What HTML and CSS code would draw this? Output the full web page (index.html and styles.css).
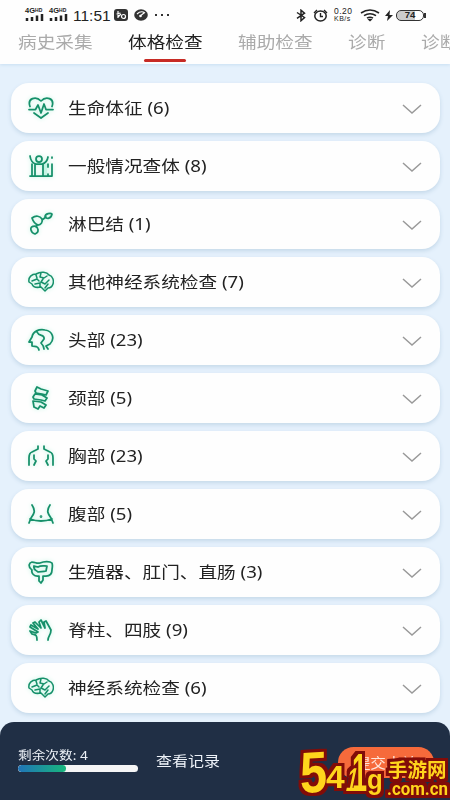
FILE: index.html
```html
<!DOCTYPE html>
<html lang="zh-CN">
<head>
<meta charset="utf-8">
<title>体格检查</title>
<link rel="stylesheet" href="styles.css">
</head>
<body>
<div class="app">
<header class="header">
<div class="status">
<div class="signal"><span>4G<i>HD</i></span><svg width="19" height="7" viewBox="0 0 19 7"><path d="M2 4v3M7 3v4M12 1.500v5.500M17 0v7" stroke="#222" stroke-width="2.5"/></svg></div>
<div class="signal"><span>4G<i>HD</i></span><svg width="19" height="7" viewBox="0 0 19 7"><path d="M2 4v3M7 3v4M12 1.500v5.500M17 0v7" stroke="#222" stroke-width="2.5"/></svg></div>
<div class="time">11:51</div>
<svg class="app-a" width="14" height="12" viewBox="0 0 14 12"><rect width="14" height="12" rx="3" fill="#333"/><path d="M4 2v7M2.500 5l4-1M4 8l3-3" stroke="#fff" stroke-width="1.2" fill="none"/><circle cx="9.500" cy="7.500" r="2" fill="none" stroke="#fff" stroke-width="1.2"/></svg>
<svg class="app-b" width="14" height="12" viewBox="0 0 14 12"><ellipse cx="7" cy="6" rx="6.800" ry="5.800" fill="#333"/><path d="M3 5q4-4 8-1M6 7l4-3" stroke="#fff" stroke-width="1.1" fill="none"/><circle cx="6.500" cy="7" r="1.300" fill="#fff"/></svg>
<svg class="dots" width="16" height="4" viewBox="0 0 16 4"><path d="M1 2h2M7 2h2M13 2h2" stroke="#333" stroke-width="2"/></svg>
<div class="status-right">
<svg width="10" height="13" viewBox="0 0 10 13"><path d="M1 3.500l7.500 5L5 11.700V1.200l3.500 3L1 9.300" fill="none" stroke="#222" stroke-width="1.5"/></svg>
<svg width="15" height="13" viewBox="0 0 15 13"><ellipse cx="7.500" cy="7" rx="5.700" ry="5" fill="none" stroke="#222" stroke-width="1.5"/><path d="M1 4l3-3M14 4l-3-3M7.500 4v3.500H10" fill="none" stroke="#222" stroke-width="1.4"/></svg>
<div class="speed"><span>0.20</span><span>KB/s</span></div>
<svg width="20" height="13" viewBox="0 0 20 13"><path d="M1 4Q10-2 19 4M4 6.700q6-4 12 0M7 9.200q3-2 6 0" fill="none" stroke="#222" stroke-width="1.6"/><path d="M7.500 10.300q2.500-1 5 0L10 12.500z" fill="#222"/></svg>
<svg class="bolt" width="8" height="11" viewBox="0 0 8 11"><path d="M5 0L0 6h3L2 11l6-6H4.500z" fill="#222"/></svg>
<div class="battery"><span>74</span></div>
</div>
</div>
<nav class="tabs">
<a class="tab"><span>病史采集</span></a><a class="tab active"><span>体格检查</span></a><a class="tab"><span>辅助检查</span></a><a class="tab short"><span>诊断</span></a><a class="tab short"><span>诊断</span></a>
</nav>
</header>
<main class="list">
<section class="card"><svg class="icon" viewBox="0 0 26 24"><path d="M2 10.500C-1 2 8 0 13 5c5-5 14-3 11 5.500M1 13.500h6.500l2.500-4.500 3 8 3-9 2 5.500h7M6 17l7 5 7-5"/></svg><h2>生命体征 (6)</h2><svg class="chevron" viewBox="0 0 20 10"><path d="M1 1l9 8 9-8"/></svg></section>
<section class="card"><svg class="icon" viewBox="0 0 26 24"><path d="M15 10h4v12h-4z" class="tint"/><circle cx="11" cy="5" r="3"/><path d="M2 2q1 7 6 8h6q5-1 6-7M7 10v12M15 10v12M4 10v12M2 22h22M24 10v12M24 3v1M20 10v3M20 20v1"/></svg><h2>一般情况查体 (8)</h2><svg class="chevron" viewBox="0 0 20 10"><path d="M1 1l9 8 9-8"/></svg></section>
<section class="card"><svg class="icon" viewBox="0 0 26 24"><path d="M4 6c4-3 8-2 10 1 1 3-1 6-4 6-3-1-5-4-6-7zM14 8l4-3M17 5c0-4 6-4 7-3-1 5-5 5-7 3zM9 13l-1 2M7 14c-7 0-4 7 0 8 5-2 3-7 0-8z"/></svg><h2>淋巴结 (1)</h2><svg class="chevron" viewBox="0 0 20 10"><path d="M1 1l9 8 9-8"/></svg></section>
<section class="card"><svg class="icon brain" viewBox="0 0 26 24"><path d="M1 12C0 7 4 4 8 4c5-3 11-2 13 1 4 1 5 6 4 9-1 3-3 4-5 4l-3 3-4-4c-5 1-8 0-9-3zM4 11l5-2 2 2M8 5l1 3M13 3l-1 4 4 1 3-2M7 14l5-1v4M15 9l-2 3 4 2 4-4M20 14l-3 4"/></svg><h2>其他神经系统检查 (7)</h2><svg class="chevron" viewBox="0 0 20 10"><path d="M1 1l9 8 9-8"/></svg></section>
<section class="card"><svg class="icon" viewBox="0 0 26 24"><path d="M11 22c-1-5-4-3-7-4v-4H1l3-5C5 3 11 1 17 2c8 1 10 9 5 14l-4 2 2 3M9 4c2 5 8 2 7 7l-3 4q3 3 3 6"/></svg><h2>头部 (23)</h2><svg class="chevron" viewBox="0 0 20 10"><path d="M1 1l9 8 9-8"/></svg></section>
<section class="card"><svg class="icon" viewBox="0 0 26 24"><path d="M9 1l4 2 7 2-2 4-4-1-6-1-1-2zM7 8l7 1 5 3-2 3-4-1-7-1-1-2zM5 15l8 1 5 3-2 3-4-2-2 3-4-2z"/></svg><h2>颈部 (5)</h2><svg class="chevron" viewBox="0 0 20 10"><path d="M1 1l9 8 9-8"/></svg></section>
<section class="card"><svg class="icon" viewBox="0 0 26 24"><path d="M10 2v3L4 8Q1 9 1 14v7M16 2v3l6 3q3 1 3 6v7M6 11v4l2 2-2 4M20 11v4l-2 2 2 4"/></svg><h2>胸部 (23)</h2><svg class="chevron" viewBox="0 0 20 10"><path d="M1 1l9 8 9-8"/></svg></section>
<section class="card"><svg class="icon" viewBox="0 0 26 24"><path d="M4 3c4 6 2 9-1 13l-2 5M22 3c-4 6-2 9 1 13l2 5M2 17q11 4 22 0"/><circle cx="13" cy="14.500" r=".5"/></svg><h2>腹部 (5)</h2><svg class="chevron" viewBox="0 0 20 10"><path d="M1 1l9 8 9-8"/></svg></section>
<section class="card"><svg class="icon" viewBox="0 0 26 24"><path d="M3 9C0 6 1 3 4 2c4 0 4 2 8 1 4-2 10-2 12 0 1 3 0 5 0 7 0 4-2 6-6 6h-3v4l-2 3-2-2v-5c-5 1-8-3-7-6zM6 6c2 1 2 0 4 1 3-2 6-1 9-1l-1 5c-3 1-6 0-8 1-2-2-5-2-4-6z"/></svg><h2>生殖器、肛门、直肠 (3)</h2><svg class="chevron" viewBox="0 0 20 10"><path d="M1 1l9 8 9-8"/></svg></section>
<section class="card"><svg class="icon" viewBox="0 0 26 24"><path d="M9 22c0-6-2-5-5-6l-2-3 6 2 2-1-8-5 1-2 7 4-5-6 2-1 6 6-2-6 2-2 4 8-1-6 2-1 5 9c0 5-3 6-3 10"/></svg><h2>脊柱、四肢 (9)</h2><svg class="chevron" viewBox="0 0 20 10"><path d="M1 1l9 8 9-8"/></svg></section>
<section class="card"><svg class="icon brain" viewBox="0 0 26 24"><path d="M1 12C0 7 4 4 8 4c5-3 11-2 13 1 4 1 5 6 4 9-1 3-3 4-5 4l-3 3-4-4c-5 1-8 0-9-3zM4 11l5-2 2 2M8 5l1 3M13 3l-1 4 4 1 3-2M7 14l5-1v4M15 9l-2 3 4 2 4-4M20 14l-3 4"/></svg><h2>神经系统检查 (6)</h2><svg class="chevron" viewBox="0 0 20 10"><path d="M1 1l9 8 9-8"/></svg></section>
</main>
<footer class="footer">
<div class="quota"><div class="quota-label">剩余次数: 4</div><div class="progress"><div class="progress-fill"></div></div></div>
<div class="records">查看记录</div>
<button class="submit"><span>提交本站</span></button>
</footer>
<svg class="watermark" width="154" height="56" viewBox="0 0 154 56">
<defs><filter id="outline" x="-10" y="-10" width="180" height="76" filterUnits="userSpaceOnUse" color-interpolation-filters="sRGB"><feMorphology in="SourceAlpha" operator="dilate" radius="3" result="wide"/><feGaussianBlur in="wide" stdDeviation=".5" result="soft"/><feFlood flood-color="#810c08"/><feComposite in2="soft" operator="in" result="edge"/><feMerge><feMergeNode in="edge"/><feMergeNode in="SourceGraphic"/></feMerge></filter></defs>
<g class="mark" filter="url(#outline)"><text class="digit" transform="translate(4 49) skewY(-3) scale(.84 1)" font-size="58">5</text><text class="digit" transform="translate(30 44) scale(1.05 1)" font-size="32">4</text><text class="digit" transform="translate(49 47) skewX(-12) scale(.55 1)" font-size="33">1</text><text class="digit" transform="translate(56 47) scale(.5 1)" font-size="54">1</text><text class="digit" transform="translate(71 45) scale(.92 1)" font-size="28">g</text><text class="han" x="92" y="33" font-size="19.500">手游网</text><text class="domain" x="91" y="51" font-size="18" textLength="61" lengthAdjust="spacingAndGlyphs">.com.cn</text></g>
</svg>
</div>
</body>
</html>
```
FILE: styles.css
```css
* { box-sizing: border-box; }
body { margin: 0; font-family: "Noto Sans", "Noto Sans CJK SC", sans-serif; color: #222; }
.app { position: relative; width: 450px; height: 800px; overflow: hidden; display: flex; flex-direction: column; background: #e5f1fc; }
.header { height: 64px; flex: none; background: #fefefe; box-shadow: 0 1px 3px #c9dff2; }
.status { height: 29px; display: flex; align-items: center; padding: 1px 25px 0; }
.signal { width: 24px; height: 14px; display: flex; flex-direction: column; font: bold 7.5px/7px "Liberation Sans", sans-serif; margin-top: -2px; }
.signal i { font-size: 5px; vertical-align: 1px; font-style: normal; }
.signal span { white-space: nowrap; height: 7px; }
.time { font: 15.5px/18px "Liberation Sans", sans-serif; width: 40px; padding-top: 1px; white-space: nowrap; }
.app-a { margin-left: 1px; }
.app-b { margin-left: 6px; }
.dots { margin-left: 6px; }
.status-right { margin-left: auto; display: flex; align-items: center; }
.status-right > svg:nth-child(2) { margin-left: 7px; }
.speed { display: flex; flex-direction: column; width: 20px; margin: 0 6px 0 6px; font: 8.5px/7px "Liberation Sans", sans-serif; letter-spacing: .5px; }
.speed span:last-child { font-size: 7px; }
.bolt { margin: 0 3px 0 5px; }
.battery { width: 28px; height: 11px; border: 1.5px solid #333; border-radius: 5px; display: flex; align-items: center; justify-content: center; background: linear-gradient(90deg, #ccc 70%, #fff 70%); font: bold 9.5px/10px "Liberation Sans", sans-serif; margin-right: 1px; }
.battery::after { content: ""; position: absolute; margin-left: 29px; width: 2px; height: 5px; background: #333; }
.tabs { height: 35px; display: flex; padding-left: 18px; white-space: nowrap; overflow: hidden; }
.tab { width: 75px; margin-right: 35px; flex: none; display: flex; flex-direction: column; font-size: 16px; line-height: 27px; color: #aaa; }
.tab span { width: max-content; transform: scaleX(1.165); transform-origin: left; }
.tab.short { width: 38px; }
.active { color: #222; }
.active::after { content: ""; width: 42px; height: 3px; border-radius: 2px; background: #c72b25; margin: 3px auto 0 16px; }
.list { padding: 19px 10px 0 11px; display: flex; flex-direction: column; gap: 8px; flex: 1; }
.card { height: 50px; flex: none; display: flex; align-items: center; padding: 0 18px 0 17px; background: #fefefe; border-radius: 18px; box-shadow: 0 2px 4px #c4d8e9; }
.icon { width: 26px; height: 24px; fill: none; stroke: #16906a; stroke-width: 1.75; stroke-linecap: round; stroke-linejoin: round; filter: drop-shadow(0 0 2px #bff5e2); }
.brain { stroke-width: 1.5; }
.tint { fill: #c5f5e4; stroke: none; }
h2 { font-size: 16px; font-weight: 400; line-height: 24px; margin: 0 0 0 14px; white-space: nowrap; transform: scaleX(1.165); transform-origin: left; }
.chevron { width: 20px; height: 10px; margin: 2px 0 0 auto; fill: none; stroke: #999; stroke-width: 1.5; }
.footer { height: 78px; flex: none; background: #202f45; border-radius: 14px 14px 0 0; color: #edf2f8; display: flex; align-items: flex-start; padding: 25px 16px 0 18px; }
.quota { width: 120px; }
.quota-label { font-size: 12px; line-height: 18px; width: max-content; transform: scaleX(1.14); transform-origin: left; }
.progress { height: 7px; background: #f5f5f5; border-radius: 4px; overflow: hidden; }
.progress-fill { width: 48px; height: 100%; border-radius: 4px; background: linear-gradient(90deg, #2074b8, #18b77d); }
.records { font-size: 14px; line-height: 22px; margin: 3px 0 0 18px; transform: scaleX(1.14); transform-origin: left; }
.submit { width: 96px; height: 31px; border: 0; border-radius: 16px; margin-left: auto; background: #f66a3b; color: #ffe6dc; font: 14px/29px "Noto Sans", "Noto Sans CJK SC", sans-serif; padding: 0; }
.submit span { display: block; transform: scaleX(1.12); }
.watermark { position: absolute; left: 296px; top: 744px; overflow: visible; }
.mark { fill: #ffd51c; }
.digit { font-family: "Liberation Sans", sans-serif; font-weight: 700; }
.domain { font-family: Roboto, sans-serif; font-weight: 700; }
.han { font-family: "Noto Sans CJK SC", sans-serif; font-weight: 700; }
```
